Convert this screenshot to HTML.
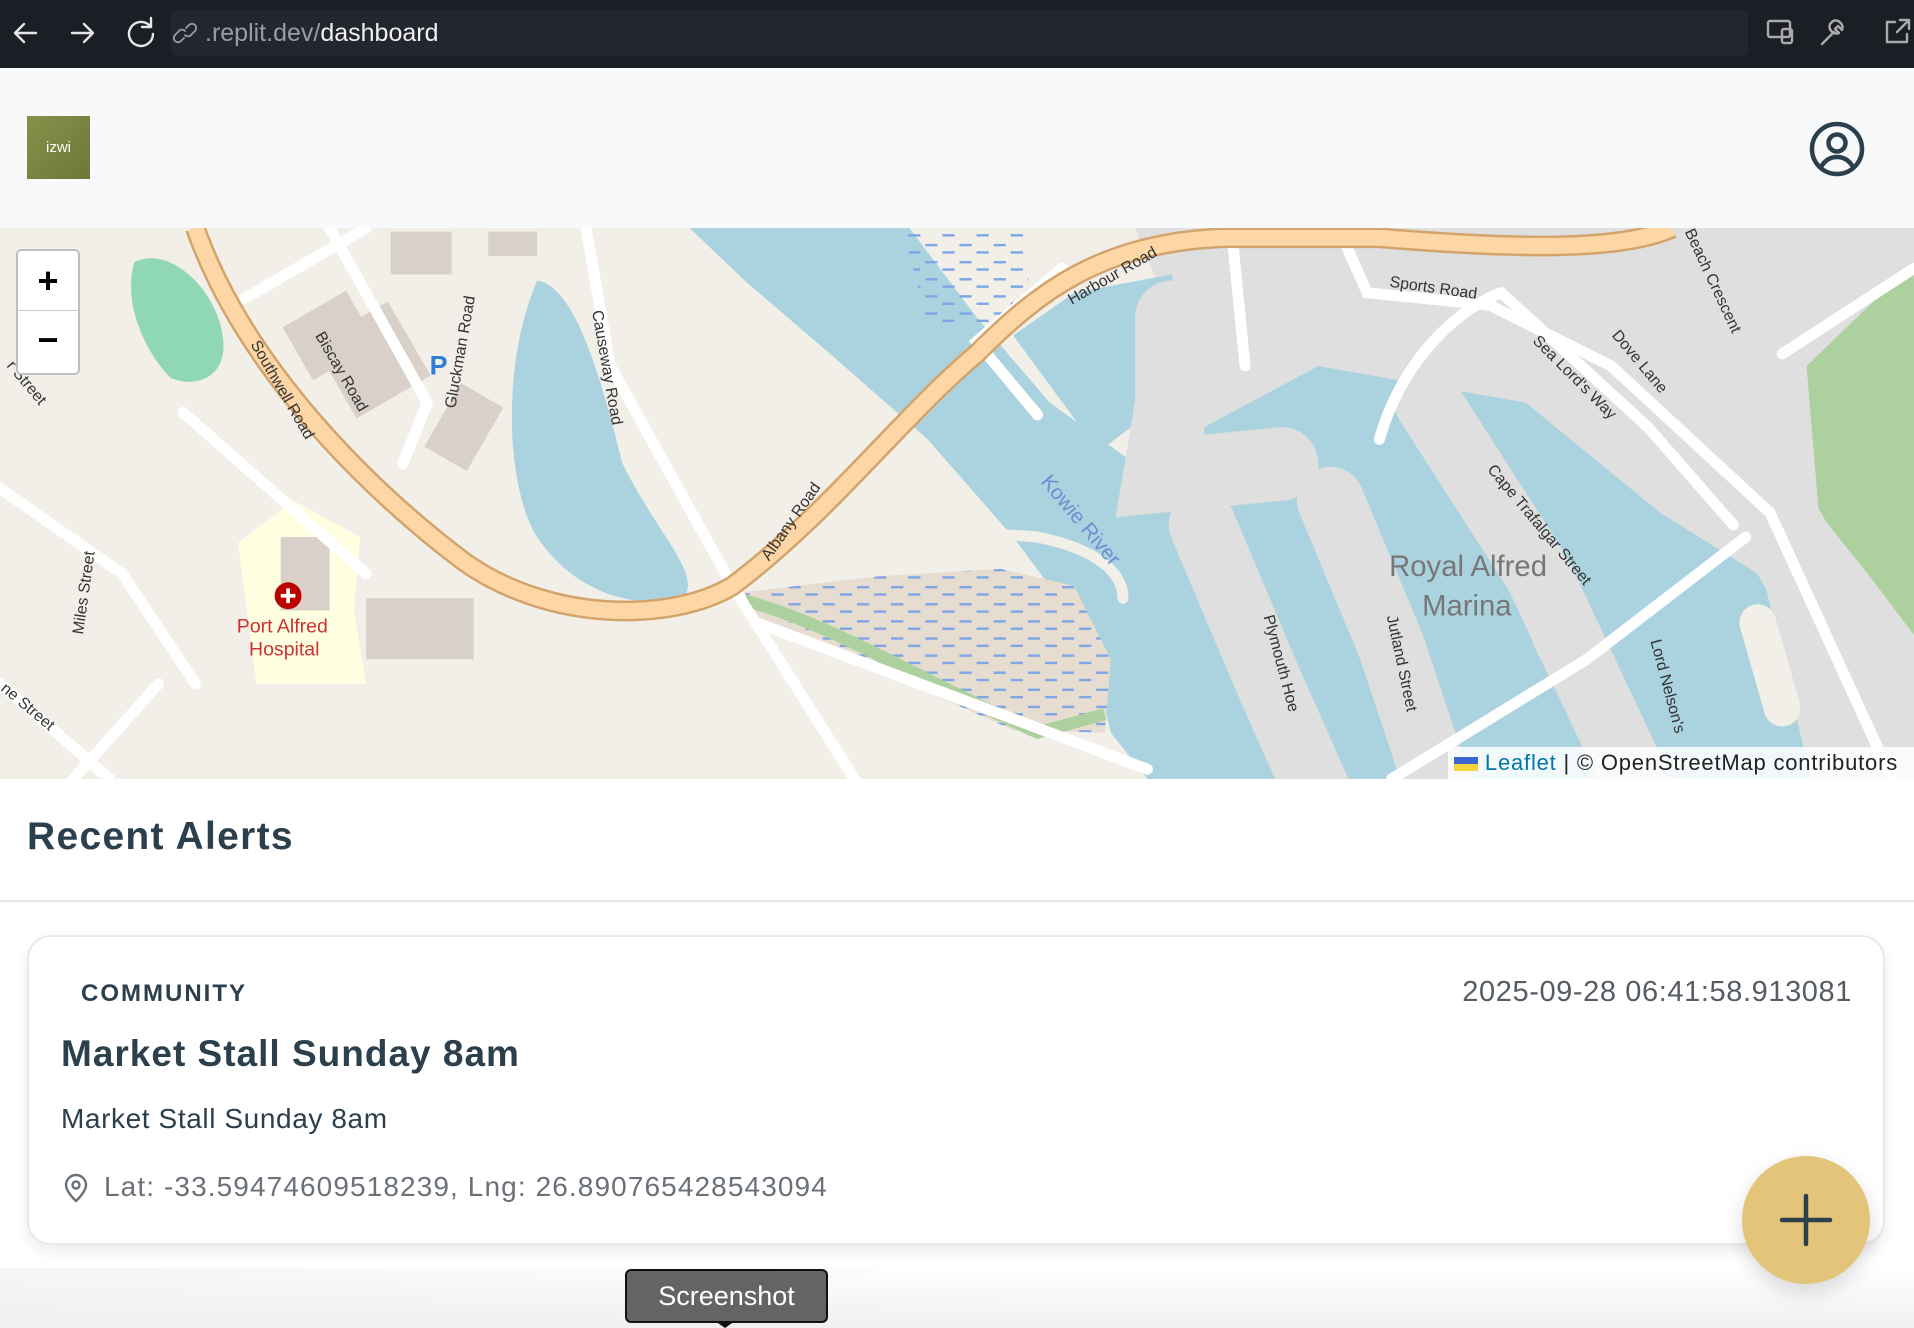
<!DOCTYPE html>
<html><head><meta charset="utf-8"><style>
*{margin:0;padding:0;box-sizing:border-box}
body{width:1914px;height:1328px;overflow:hidden;background:#fff;font-family:"Liberation Sans",sans-serif;position:relative}
.abs{position:absolute}
</style></head><body>
<div class="abs" style="left:0;top:0;width:1914px;height:68px;background:#1b1e25"></div>
<div class="abs" style="left:171px;top:10px;width:1577px;height:46px;background:#23262e;border-radius:6px"></div>
<svg class="abs" style="left:0;top:0" width="1914" height="68" fill="none" stroke="#e6e6e6" stroke-width="2.4" stroke-linecap="round" stroke-linejoin="round">
<path d="M36 33H16M24 24l-9 9 9 9"/>
<path d="M72 33h20M84 24l9 9-9 9"/>
<path d="M150 26a12 12 0 1 0 3 8M151 18v9h-9"/>
<path d="M184 38l-3 3a4 4 0 0 1-6-6l4-4a4 4 0 0 1 6 0M186 28l3-3a4 4 0 0 1 6 6l-4 4a4 4 0 0 1-6 0" stroke="#9a9ca2" stroke-width="1.8"/>
<rect x="1768" y="21" width="22" height="16" rx="2" stroke="#aaa"/><rect x="1782" y="29" width="10" height="14" rx="2" stroke="#aaa"/>
<path d="M1822 44l12-12M1830 24a7 7 0 0 0 9 9l-4-4 3-3 4 4a7 7 0 0 0-9-9z" stroke="#aaa"/>
<path d="M1895 22h-8v20h20v-8M1900 20h9v9M1909 20l-12 12" stroke="#aaa"/>
</svg>
<div class="abs" style="left:205px;top:18px;font-size:25px;color:#9a9ca2;line-height:30px">.replit.dev/<span style="color:#f1f1f1">dashboard</span></div>
<div class="abs" style="left:0;top:68px;width:1914px;height:160px;background:#f7f9fa"></div>
<div class="abs" style="left:27px;top:116px;width:63px;height:63px;background:linear-gradient(135deg,#86924a,#6b7838);color:#fff;font-size:15px;text-align:center;line-height:63px">izwi</div>
<svg class="abs" style="left:1808px;top:120px" width="58" height="58" fill="none" stroke="#2b3f4c" stroke-width="4.5"><circle cx="29" cy="29" r="25"/><circle cx="29" cy="23" r="8.5"/><path d="M13 47c4-7 10-10 16-10s12 3 16 10"/></svg>
<svg class="abs" style="left:0;top:228px" width="1914" height="551" viewBox="0 187 1568 451" preserveAspectRatio="none">
<defs><pattern id="wet" width="28" height="14" patternUnits="userSpaceOnUse"><path d="M2 5h10M16 11h10" stroke="#7fa7e6" stroke-width="2"/></pattern></defs>
<rect x="0" y="187" width="1568" height="451" fill="#f2efe9"/>
<polygon points="930,187 1568,187 1568,638 1080,638 980,560 950,420 960,260" fill="#e0dfdf"/>
<polygon points="1480,300 1568,215 1568,520 1530,470 1490,420" fill="#add19e"/>
<polygon points="565,187 745,187 800,260 860,330 930,380 1080,300 1250,330 1360,420 1440,470 1490,520 1510,600 1490,638 940,638 910,600 890,520 830,440 760,360 680,290 610,230" fill="#aad3df"/>
<polygon points="830,275 880,240 960,225 975,300 940,340 900,370" fill="#aad3df"/>
<g stroke="#e0dfdf" stroke-linecap="round" fill="none">
<path d="M960 260 L960 330 L950 390 L1050 380" stroke-width="60"/>
<path d="M985 430 L1040 560 L1080 650" stroke-width="55"/>
<path d="M1090 410 L1140 530 L1180 650" stroke-width="55"/>
<path d="M1170 330 L1260 470 L1340 640" stroke-width="55"/>
<path d="M1280 520 L1330 620" stroke-width="50"/>
<path d="M1400 330 L1480 470 L1520 640" stroke-width="70"/>
<path d="M1440 510 L1460 580" stroke-width="30" stroke="#f2efe9"/>
</g>
<path d="M440 230 C470 235 490 300 510 380 C540 440 575 470 560 490 C520 500 470 485 440 440 C415 400 410 300 440 230Z" fill="#aad3df"/>
<polygon points="740,190 840,190 845,265 760,265" fill="url(#wet)"/>
<polygon points="610,485 720,472 820,466 880,480 910,540 905,600 830,598 700,540 620,505" fill="#e6ddd0"/>
<polygon points="610,485 720,472 820,466 880,480 910,540 905,600 830,598 700,540 620,505" fill="url(#wet)"/>
<path d="M610 492 C680 510 760 560 850 600 L905 585" stroke="#add19e" stroke-width="10" fill="none"/>
<path d="M110 215 C140 200 180 240 183 280 C185 310 160 318 140 310 C120 290 100 250 110 215Z" fill="#8fd8b3"/>
<polygon points="195,445 240,410 295,440 290,500 300,560 210,560" fill="#fefee0"/>
<g fill="#d9d0c9"><rect x="300" y="490" width="88" height="50"/><rect x="240" y="250" width="60" height="50" transform="rotate(-30 270 275)"/><rect x="270" y="260" width="70" height="70" transform="rotate(-30 305 295)"/><rect x="320" y="190" width="50" height="35"/><rect x="400" y="190" width="40" height="20"/><rect x="360" y="320" width="40" height="60" transform="rotate(30 380 350)"/><rect x="230" y="440" width="40" height="60"/></g>
<g stroke="#fff" stroke-width="9" fill="none" stroke-linecap="round">
<path d="M480 187 L500 300 L600 480 L700 638"/>
<path d="M620 510 L780 570 L940 630"/>
<path d="M0 400 L100 470 L160 560"/><path d="M60 638 L130 560"/>
<path d="M200 245 L300 187"/><path d="M270 187 L350 330 L330 380"/>
<path d="M0 560 L90 638"/><path d="M150 338 L300 470"/>
<path d="M620 420 C680 470 760 430 850 440 C900 450 920 470 920 490" stroke="#f2efe9"/>
<path d="M1100 195 L1120 240 L1220 250 L1320 300 L1450 420 L1550 638"/>
<path d="M1230 240 L1350 350 L1420 430"/><path d="M1130 360 C1150 290 1200 250 1230 240"/>
<path d="M1140 638 L1300 540 L1430 440"/><path d="M1460 290 L1568 220"/>
<path d="M850 340 L800 280 L870 220"/><path d="M1010 200 L1020 300"/>
</g>
<path d="M160 187 C200 300 300 400 380 460 C450 510 550 510 600 480 C680 420 740 340 800 290 C850 240 900 200 1000 195 L1130 195 C1250 205 1330 205 1370 187" stroke="#d2a36b" stroke-width="17" fill="none"/>
<path d="M160 187 C200 300 300 400 380 460 C450 510 550 510 600 480 C680 420 740 340 800 290 C850 240 900 200 1000 195 L1130 195 C1250 205 1330 205 1370 187" stroke="#fcd6a4" stroke-width="13" fill="none"/>
<circle cx="236" cy="488" r="11" fill="#b00"/><path d="M230 488h12M236 482v12" stroke="#fff" stroke-width="3"/>
<g font-family="Liberation Sans,sans-serif" fill="#333" font-size="13">
<text x="194" y="518" fill="#c33" font-size="16">Port Alfred</text><text x="204" y="537" fill="#c33" font-size="16">Hospital</text>
<text x="1138" y="472" fill="#777" font-size="24">Royal Alfred</text><text x="1165" y="504" fill="#777" font-size="24">Marina</text>
<text transform="translate(852,395) rotate(50)" fill="#6b8fd0" font-size="17">Kowie River</text>
<text transform="translate(630,460) rotate(-55)">Albany Road</text>
<text transform="translate(878,250) rotate(-30)">Harbour Road</text>
<text transform="translate(1138,235) rotate(8)">Sports Road</text>
<text transform="translate(1255,280) rotate(45)">Sea Lord's Way</text>
<text transform="translate(1320,275) rotate(50)">Dove Lane</text>
<text transform="translate(1380,190) rotate(65)">Beach Crescent</text>
<text transform="translate(1218,385) rotate(50)">Cape Trafalgar Street</text>
<text transform="translate(1035,505) rotate(75)">Plymouth Hoe</text>
<text transform="translate(1136,505) rotate(78)">Jutland Street</text>
<text transform="translate(1352,525) rotate(75)">Lord Nelson's</text>
<text transform="translate(205,282) rotate(60)">Southwell Road</text>
<text transform="translate(258,275) rotate(60)">Biscay Road</text>
<text transform="translate(373,335) rotate(-80)">Gluckman Road</text>
<text transform="translate(485,255) rotate(80)">Causeway Road</text>
<text transform="translate(68,520) rotate(-82)">Miles Street</text>
<text transform="translate(0,565) rotate(40)">ne Street</text>
<text transform="translate(5,300) rotate(50)">r Street</text>
<text x="352" y="307" fill="#2b7fd8" font-size="22" font-weight="bold">P</text>
</g>
</svg>
<div class="abs" style="left:16px;top:249px;width:64px;height:126px;border:2px solid rgba(0,0,0,0.25);border-radius:5px;background:#fff;overflow:hidden">
<div style="height:60px;border-bottom:1px solid #ccc;text-align:center;font-size:36px;line-height:60px;font-weight:bold;color:#000">+</div>
<div style="height:60px;text-align:center;font-size:36px;line-height:58px;font-weight:bold;color:#000">−</div></div>
<div class="abs" style="left:1448px;top:747px;width:466px;height:32px;background:rgba(255,255,255,0.85);font-size:22px;letter-spacing:0.8px;line-height:32px;color:#222;padding-left:6px;white-space:nowrap"><span style="display:inline-block;width:24px;height:14px;background:linear-gradient(#3b66d0 50%,#f5d23a 50%);vertical-align:-1px"></span> <span style="color:#0078a8">Leaflet</span> | © OpenStreetMap contributors</div>
<div class="abs" style="left:0;top:1268px;width:1914px;height:60px;background:linear-gradient(180deg,rgba(255,255,255,0),rgba(238,238,238,0.9)),linear-gradient(90deg,#f6f6f6,#fff 55%)"></div>
<div class="abs" style="left:27px;top:815px;font-size:39px;font-weight:bold;letter-spacing:1.3px;color:#2b3f4c">Recent Alerts</div>
<div class="abs" style="left:0;top:900px;width:1914px;height:2px;background:#e6e7ea"></div>
<div class="abs" style="left:27px;top:935px;width:1858px;height:310px;border:2px solid #e8e9ec;border-radius:24px;background:#fff;box-shadow:0 6px 14px rgba(0,0,0,0.08)"></div>
<div class="abs" style="left:81px;top:980px;font-size:24px;font-weight:bold;letter-spacing:2px;color:#2b3f4c">COMMUNITY</div>
<div class="abs" style="right:62px;top:976px;font-size:29px;letter-spacing:0.6px;color:#555c64">2025-09-28 06:41:58.913081</div>
<div class="abs" style="left:61px;top:1033px;font-size:37px;font-weight:bold;letter-spacing:1px;color:#2b3f4c">Market Stall Sunday 8am</div>
<div class="abs" style="left:61px;top:1103px;font-size:28px;letter-spacing:0.6px;color:#2b3f4c">Market Stall Sunday 8am</div>
<svg class="abs" style="left:63px;top:1173px" width="26" height="30" fill="none" stroke="#6b7178" stroke-width="2.4"><path d="M13 28s10-9 10-16a10 10 0 0 0-20 0c0 7 10 16 10 16z"/><circle cx="13" cy="12" r="3.5"/></svg>
<div class="abs" style="left:104px;top:1171px;font-size:28px;letter-spacing:1.1px;color:#6b7178">Lat: -33.59474609518239, Lng: 26.890765428543094</div>
<div class="abs" style="left:1742px;top:1156px;width:128px;height:128px;border-radius:50%;background:#e3c57a;box-shadow:0 8px 20px rgba(0,0,0,0.15)"></div>
<svg class="abs" style="left:1776px;top:1190px" width="60" height="60" stroke="#2b3f4c" stroke-width="4.5" stroke-linecap="round"><path d="M30 6v48M6 30h48"/></svg>
<div class="abs" style="left:625px;top:1269px;width:203px;height:54px;background:#636466;border:2px solid #111;border-radius:6px;color:#fff;font-size:27px;text-align:center;line-height:50px">Screenshot</div>
<div class="abs" style="left:715px;top:1321px;width:0;height:0;border-left:10px solid transparent;border-right:10px solid transparent;border-top:7px solid #111"></div>
</body></html>
